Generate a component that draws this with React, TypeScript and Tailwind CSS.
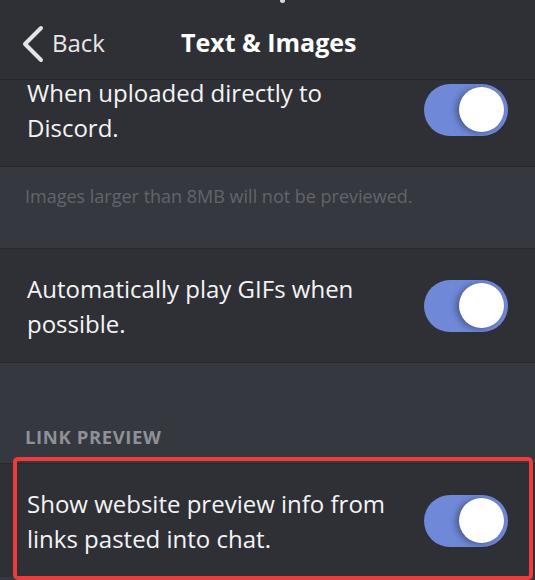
import React from "react";

function Toggle() {
  return (
    <div className="relative h-[52px] w-[84px] shrink-0 rounded-full bg-[#7088d8]">
      <div className="absolute right-[4px] top-[3px] h-[45px] w-[45px] rounded-full bg-white shadow-[-3px_1px_6px_rgba(0,0,0,0.35)]" />
    </div>
  );
}

function Row({ lines, children }: { lines: string[]; children?: React.ReactNode }) {
  return (
    <div className="relative flex h-[113px] items-center justify-between bg-[#2f3035] pl-[27px] pr-[27px]">
      <div className="text-[24px] leading-[35px] text-[#f4f4f5]">
        {lines.map((l) => (
          <div key={l}>{l}</div>
        ))}
      </div>
      <Toggle />
      {children}
    </div>
  );
}

export default function App() {
  return (
    <div
      className="h-[580px] w-[535px] overflow-hidden bg-[#36383f]"
      style={{ fontFamily: '"Open Sans", "Noto Sans", sans-serif' }}
    >
      <div className="relative z-10 flex h-[80px] items-center border-b border-[#26272b] bg-[#2f3035] pt-[6px]">
        <div className="absolute left-[280px] top-0 h-[3px] w-[5px] rounded-b bg-white/80" />
        <div className="flex items-center pl-[20px]">
          <svg width="26" height="38" viewBox="0 0 26 38" className="mt-[2px]">
            <path d="M21 3 L5 19 L21 35" fill="none" stroke="#e3e4e6" strokeWidth="4" strokeLinecap="round" strokeLinejoin="round" />
          </svg>
          <span className="ml-[6px] text-[24px] text-[#e8e8ea]">Back</span>
        </div>
        <div className="ml-[76px] text-[25px] font-bold text-white">Text &amp; Images</div>
      </div>
      <div className="h-[500px] overflow-hidden">
        <div className="mt-[-27px]">
          <Row lines={["When uploaded directly to", "Discord."]} />
          <div className="h-[82px] border-t border-[#28292d] bg-[#36383f] pl-[25px] pt-[16px] text-[18px] text-[#62656c]">
            Images larger than 8MB will not be previewed.
          </div>
          <div className="border-t border-[#28292d]">
            <Row lines={["Automatically play GIFs when", "possible."]} />
          </div>
          <div className="flex h-[101px] items-end border-t border-[#28292d] bg-[#36383f] pb-[12px] pl-[25px] text-[18.5px] font-bold tracking-[0.6px] text-[#8e9198]">
            LINK PREVIEW
          </div>
          <div className="relative border-t border-[#28292d]">
            <Row lines={["Show website preview info from", "links pasted into chat."]} />
            <div className="absolute left-[13px] right-[2px] top-[-7px] h-[123px] rounded-[5px] border-[4px] border-[#ef3b3b]" />
          </div>
        </div>
      </div>
    </div>
  );
}
